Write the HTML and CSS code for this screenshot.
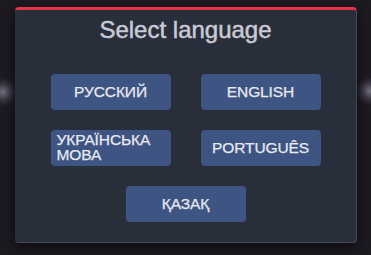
FILE: index.html
```html
<!DOCTYPE html>
<html lang="en">
<head>
<meta charset="utf-8">
<title>Select language</title>
<link rel="stylesheet" href="styles.css">
</head>
<body>
<div class="modal">
  <h1 class="title">Select language</h1>
  <div class="langs">
    <button class="lang"><span>РУССКИЙ</span></button>
    <button class="lang"><span>ENGLISH</span></button>
    <button class="lang"><span>УКРАЇНСЬКА МОВА</span></button>
    <button class="lang"><span>PORTUGUÊS</span></button>
    <button class="lang lang-wide"><span>ҚАЗАҚ</span></button>
  </div>
</div>
</body>
</html>
```
FILE: styles.css
```css
html, body {
  margin: 0;
  padding: 0;
}
body {
  width: 371px;
  height: 255px;
  overflow: hidden;
  background-color: #1d1a22;
  background-image:
    radial-gradient(circle at 3px 92px, rgba(125,123,140,0.9) 0, rgba(90,88,105,0.45) 8px, rgba(29,26,34,0) 14px),
    radial-gradient(circle at 370px 91px, rgba(125,123,140,0.9) 0, rgba(90,88,105,0.45) 8px, rgba(29,26,34,0) 14px);
  font-family: "Liberation Sans", Arial, sans-serif;
  padding-top: 7px;
  padding-left: 15px;
  box-sizing: border-box;
}
.modal {
  width: 342px;
  height: 236px;
  box-sizing: border-box;
  background: #292e3b;
  border-top: 3px solid #e5304a;
  border-right: 1px solid #444a5a;
  border-bottom: 1px solid #444a5a;
  border-radius: 4px;
  box-shadow: 0 4px 14px rgba(0,0,0,0.6);
  padding-top: 6px;
  display: flex;
  flex-direction: column;
  align-items: center;
}
.title {
  margin: 0;
  font-size: 24px;
  line-height: 28px;
  font-weight: normal;
  color: #c9cad3;
  -webkit-text-stroke: 0.5px #c9cad3;
}
.langs {
  margin-top: 30px;
  display: grid;
  grid-template-columns: 120px 120px;
  column-gap: 30px;
  row-gap: 20px;
}
.lang {
  width: 120px;
  height: 36px;
  padding: 0 6px 2px;
  border: none;
  border-radius: 4px;
  background: #3e5482;
  color: #e8eaf1;
  font-family: "Liberation Sans", Arial, sans-serif;
  font-size: 15.5px;
  line-height: 15px;
  letter-spacing: -0.1px;
  -webkit-text-stroke: 0.25px #e8eaf1;
  display: flex;
  align-items: center;
  justify-content: center;
  text-align: left;
}
.lang-wide {
  grid-column: 1 / span 2;
  justify-self: center;
}
```
